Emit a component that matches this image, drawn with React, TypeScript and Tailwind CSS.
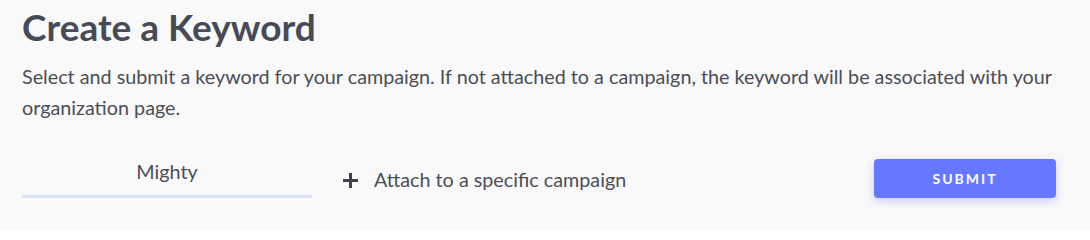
import React from 'react';

export default function App() {
    return (
        <div className="min-h-[230px] w-full bg-[#f9f9f9] px-[22px] pt-[4px] font-['Lato',sans-serif] text-[#4a4d57]">
            <h1 className="text-[37px] font-bold leading-[46px] text-[#474b57]">Create a Keyword</h1>
            <p className="mt-[11px] pr-[10px] text-[19.75px] leading-[31px] text-[#4b4e57]">
                Select and submit a keyword for your campaign. If not attached to a campaign, the keyword will be associated with your organization page.
            </p>
            <div className="mt-[35px] flex items-start">
                <div className="mt-[2px] w-[290px] border-b-[3px] border-[#dce3f5] pb-[11px] text-center text-[19.75px] leading-[24px] text-[#4b4e57]">
                    Mighty
                </div>
                <button className="ml-[30px] mt-[10px] flex h-[24px] items-center gap-[15px] text-[19.75px] leading-[24px] text-[#4b4e57]">
                    <svg width="17" height="17" viewBox="0 0 17 17" className="text-[#3f4350]">
                        <path d="M8.5 1v15M1 8.5h15" stroke="currentColor" strokeWidth="3" />
                    </svg>
                    Attach to a specific campaign
                </button>
                <button className="ml-auto mr-[12px] mt-[1px] h-[39px] w-[182px] rounded-[4px] bg-[#6678ff] text-[14px] font-bold tracking-[2px] text-white shadow-[0_3px_8px_rgba(102,120,255,0.35)]">
                    SUBMIT
                </button>
            </div>
        </div>
    );
}
